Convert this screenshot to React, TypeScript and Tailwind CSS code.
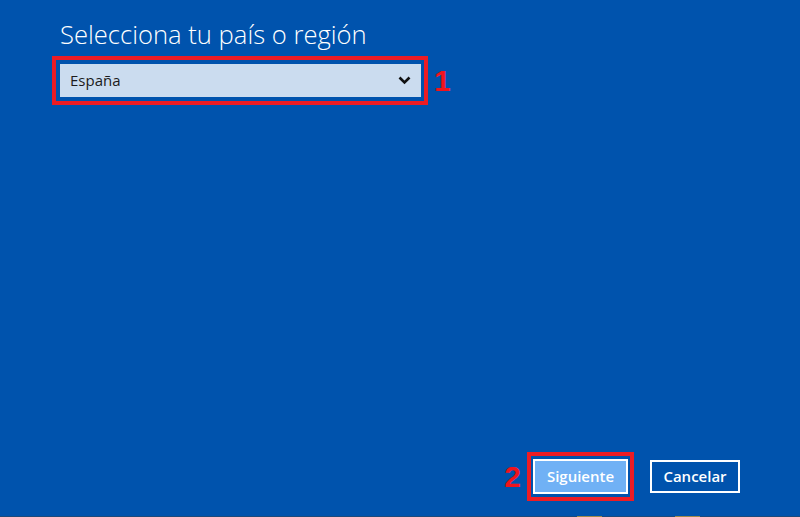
import React from "react";

const Chevron = () => (
  <svg width="13" height="9" viewBox="0 0 13 9" className="shrink-0">
    <polyline points="1.5,1.5 6.5,6.5 11.5,1.5" fill="none" stroke="#111" strokeWidth="2.6" />
  </svg>
);

const App = () => {
  return (
    <div className="w-[800px] h-[517px] bg-[#0053ad] flex flex-col overflow-hidden font-['Open_Sans',sans-serif]">
      <div className="flex-1 flex flex-col pl-[52px] pt-[19px]">
        <h1 className="pl-[8px] text-[25.6px] leading-[32px] font-light text-white">
          Selecciona tu país o región
        </h1>
        <div className="flex items-center mt-[5px]">
          <div className="w-[376px] h-[49px] border-4 border-[#ed1c24] pl-[4px] pr-[3px] py-[4px]">
            <div className="h-full bg-[#cbdcef] flex items-center justify-between pl-[10px] pr-[10px]">
              <span className="text-[15px] text-[#1b1b1b]">España</span>
              <Chevron />
            </div>
          </div>
          <span className="ml-[6px] text-[30px] leading-none font-bold text-[#f0141c] font-['Liberation_Sans',sans-serif]">
            1
          </span>
        </div>
      </div>

      <div className="flex justify-end items-center pr-[60px] pb-[15px]">
        <span className="mr-[6px] text-[30px] leading-none font-bold text-[#f0141c] font-['Liberation_Sans',sans-serif]">
          2
        </span>
        <div className="w-[107px] h-[49px] border-4 border-[#ed1c24] px-[2px] py-[3px]">
          <button className="w-full h-full bg-[#70b1f5] border-2 border-white text-white text-[15px] font-semibold flex items-center justify-center">
            Siguiente
          </button>
        </div>
        <button className="ml-[16px] w-[90px] h-[33px] border-2 border-white text-white text-[15px] font-semibold flex items-center justify-center">
          Cancelar
        </button>
      </div>

      <div className="h-px bg-[#1c4a7b] flex">
        <div className="w-[577px]" />
        <div className="w-[25px] bg-[#a08a4a]" />
        <div className="w-[73px]" />
        <div className="w-[25px] bg-[#a08a4a]" />
      </div>
    </div>
  );
};

export default App;
